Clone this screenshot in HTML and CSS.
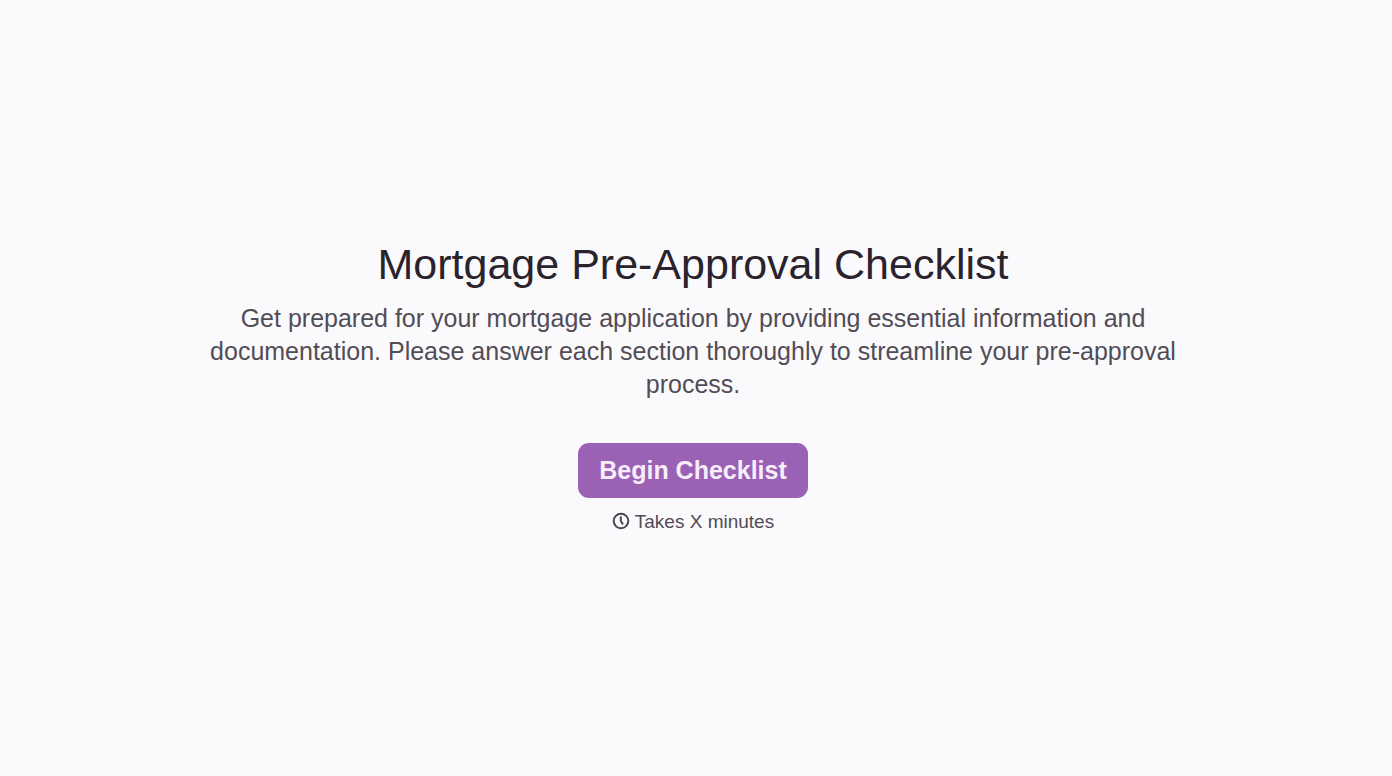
FILE: index.html
```html
<!DOCTYPE html>
<html lang="en">
<head>
    <meta charset="UTF-8">
    <meta name="viewport" content="width=device-width, initial-scale=1.0">
    <title>Mortgage Pre-Approval Checklist</title>
    <link rel="stylesheet" href="styles.css">
</head>
<body>
    <main class="welcome">
        <h1 class="welcome-title">Mortgage Pre-Approval Checklist</h1>
        <p class="welcome-text">Get prepared for your mortgage application by providing essential information and documentation. Please answer each section thoroughly to streamline your pre-approval process.</p>
        <button type="button" class="begin-button">Begin Checklist</button>
        <div class="time-note">
            <svg class="clock-icon" viewBox="0 0 18 18" aria-hidden="true">
                <circle cx="9" cy="9" r="7.3"/>
                <path d="M8.8 5.2V9l1.8 2.7"/>
            </svg>
            <span>Takes X minutes</span>
        </div>
    </main>
</body>
</html>
```
FILE: styles.css
```css
* {
    box-sizing: border-box;
}

body {
    margin: 0;
    padding: 0 6px 6px 0;
    min-height: 100vh;
    display: flex;
    align-items: center;
    justify-content: center;
    background-color: #fafafd;
    font-family: "Liberation Sans", Arial, sans-serif;
    color: #524c55;
}

.welcome {
    display: flex;
    flex-direction: column;
    align-items: center;
    max-width: 1000px;
    padding: 0 12px;
    text-align: center;
}

.welcome-title {
    margin: 0 0 10px;
    font-size: 43px;
    line-height: 56px;
    font-weight: normal;
    color: #2a232c;
}

.welcome-text {
    margin: 0 0 42px;
    font-size: 25px;
    line-height: 33px;
}

.begin-button {
    padding: 0 21px;
    height: 55px;
    border: none;
    border-radius: 11px;
    background-color: #9b61b5;
    color: #f6eefb;
    font-family: inherit;
    font-size: 25px;
    font-weight: bold;
    cursor: pointer;
}

.begin-button:hover {
    background-color: #8a52a4;
}

.time-note {
    display: flex;
    align-items: center;
    gap: 5px;
    margin-top: 12px;
    font-size: 19px;
    line-height: 24px;
}

.clock-icon {
    width: 18px;
    height: 18px;
    margin-bottom: 2px;
    fill: none;
    stroke: #4a444e;
    stroke-width: 2;
    stroke-linecap: round;
    stroke-linejoin: round;
}
```
